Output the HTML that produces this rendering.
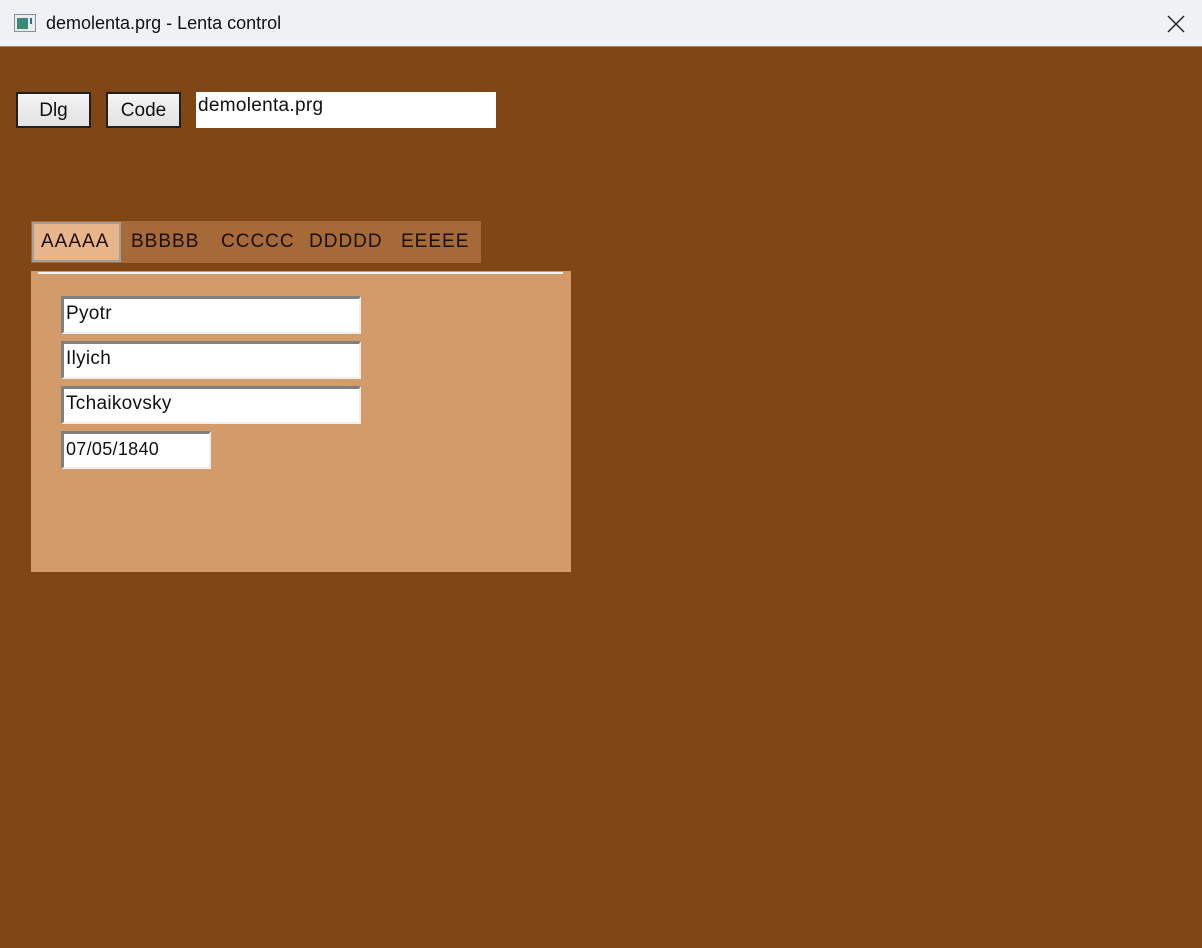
<!DOCTYPE html>
<html><head><style>
body{margin:0;width:1202px;height:948px;overflow:hidden;background:#814615;font-family:"Liberation Sans",sans-serif;position:relative}
.a{position:absolute;box-sizing:border-box}
.title{left:0;top:0;width:1202px;height:47px;background:#eef2f5;border-bottom:1px solid #b0855c}
.btn{background:linear-gradient(#f4f4f4,#e2e2e2);border:2px solid #202020;font-size:19px;text-align:center;line-height:34px;color:#111}
.inp{background:#fff;border-top:3px solid #808080;border-left:3px solid #808080;border-right:2px solid #eee;border-bottom:2px solid #eee;font-size:19px;padding-left:2px;line-height:30px;color:#111;letter-spacing:0.3px}
.tab{font-size:19px;top:221px;height:42px;line-height:42px;color:#1a0e05;letter-spacing:1px}
</style></head><body>
<div class="a title"></div>
<svg class="a" style="left:14px;top:14px" width="22" height="18"><rect x="0.5" y="0.5" width="21" height="17" fill="#e8ecef" stroke="#8a9098"/><rect x="3" y="4" width="11" height="11" fill="#3a8a7a"/><rect x="16" y="4" width="2" height="6" fill="#2c6a9a"/></svg>
<div class="a" style="left:46px;top:13px;font-size:18px;color:#111">demolenta.prg - Lenta control</div>
<svg class="a" style="left:1167px;top:15px" width="18" height="18"><path d="M1 1L17 17M17 1L1 17" stroke="#222" stroke-width="1.5"/></svg>
<div class="a btn" style="left:16px;top:92px;width:75px;height:36px">Dlg</div>
<div class="a btn" style="left:106px;top:92px;width:75px;height:36px">Code</div>
<div class="a" style="left:196px;top:92px;width:300px;height:36px;background:#fff;font-size:19px;padding-left:2px;line-height:28px;color:#111;letter-spacing:0.3px">demolenta.prg</div>
<div class="a" style="left:31px;top:221px;width:450px;height:42px;background:#a66a38"></div>
<div class="a" style="left:32px;top:222px;width:89px;height:40px;background:#e8b48a;border:2px solid #a0a0a0"></div>
<div class="a tab" style="left:41px">AAAAA</div>
<div class="a tab" style="left:131px">BBBBB</div>
<div class="a tab" style="left:221px">CCCCC</div>
<div class="a tab" style="left:309px">DDDDD</div>
<div class="a tab" style="left:401px">EEEEE</div>
<div class="a" style="left:31px;top:271px;width:540px;height:301px;background:#d39a6a"></div>
<div class="a" style="left:38px;top:272px;width:525px;height:2px;background:#f4f4f4"></div>
<div class="a inp" style="left:61px;top:296px;width:300px;height:38px">Pyotr</div>
<div class="a inp" style="left:61px;top:341px;width:300px;height:38px">Ilyich</div>
<div class="a inp" style="left:61px;top:386px;width:300px;height:38px">Tchaikovsky</div>
<div class="a inp" style="left:61px;top:431px;width:150px;height:38px;font-size:18px">07/05/1840</div>
</body></html>
